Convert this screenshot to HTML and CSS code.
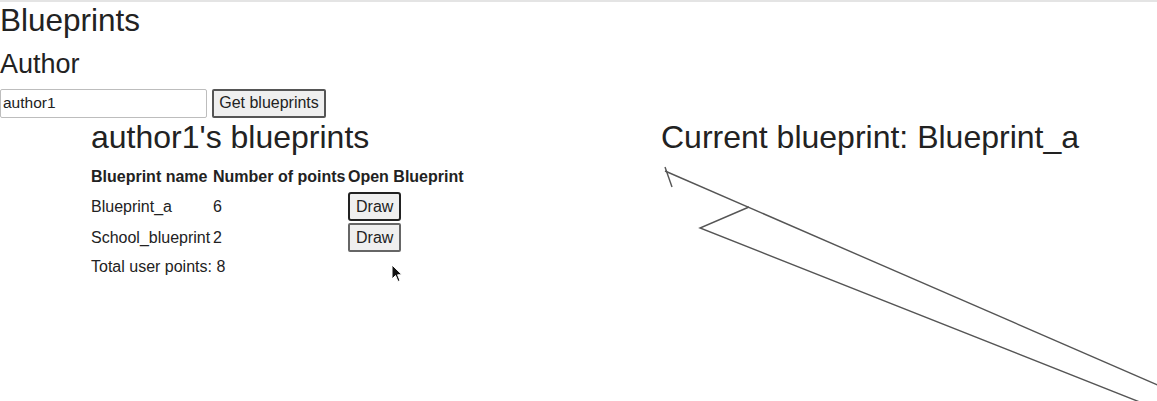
FILE: index.html
```html
<!DOCTYPE html>
<html>
<head>
<meta charset="utf-8">
<link rel="stylesheet" href="styles.css">
</head>
<body>
<h1 class="title">Blueprints</h1>
<h2 class="author-label">Author</h2>
<div class="search">
  <input class="author-input" type="text" value="author1">
  <button class="btn get-btn">Get blueprints</button>
</div>
<div class="main">
  <section class="left">
    <h2 class="col-title">author1's blueprints</h2>
    <table class="bp-table">
      <thead>
        <tr class="head-row">
          <th class="c1">Blueprint name</th>
          <th class="c2">Number of points</th>
          <th class="c3">Open Blueprint</th>
        </tr>
      </thead>
      <tbody>
        <tr class="row">
          <td>Blueprint_a</td>
          <td>6</td>
          <td><button class="btn draw-btn focused">Draw</button></td>
        </tr>
        <tr class="row">
          <td>School_blueprint</td>
          <td>2</td>
          <td><button class="btn draw-btn">Draw</button></td>
        </tr>
      </tbody>
    </table>
    <div class="total">Total user points: 8</div>
    <svg class="cursor" width="12" height="19" viewBox="0 0 12 19">
      <path d="M1 1 L1 15 L4.5 11.5 L7 17.5 L9 16.6 L6.6 10.8 L11 10.8 Z" fill="#111" stroke="#fff" stroke-width="1"/>
    </svg>
  </section>
  <section class="right">
    <h2 class="col-title">Current blueprint: Blueprint_a</h2>
    <svg class="canvas" width="496" height="241" viewBox="661 160 496 241">
      <line x1="665" y1="166" x2="672" y2="186" stroke="#555" stroke-width="1.4"/>
      <polyline points="665,170 1160,385" fill="none" stroke="#555" stroke-width="1.4"/>
      <polyline points="749,206 700,227 1165,411" fill="none" stroke="#555" stroke-width="1.4"/>
    </svg>
  </section>
</div>
</body>
</html>
```

FILE: styles.css
```css
html, body {
  margin: 0;
  padding: 0;
  background: #fff;
  overflow: hidden;
}
body {
  font-family: "Liberation Sans", Arial, sans-serif;
  color: #222;
  font-size: 16px;
  border-top: 2px solid #e4e4e4;
  width: 1157px;
  height: 399px;
}
.title {
  margin: 0;
  font-size: 31.5px;
  font-weight: normal;
  line-height: 36px;
}
.author-label {
  margin: 11px 0 0 0;
  font-size: 27px;
  font-weight: normal;
  line-height: 31px;
}
.search {
  display: flex;
  align-items: center;
  gap: 5px;
  margin-top: 8px;
  height: 30px;
}
.author-input {
  box-sizing: border-box;
  width: 207px;
  height: 29px;
  margin: 0;
  padding: 1px 2px;
  border: 1px solid #bdbdbd;
  border-radius: 2px;
  font-family: "Liberation Sans", Arial, sans-serif;
  font-size: 15.5px;
  color: #222;
  background: #fff;
}
.btn {
  box-sizing: border-box;
  margin: 0;
  font-family: "Liberation Sans", Arial, sans-serif;
  font-size: 16px;
  color: #222;
  background: #efefef;
  border: 2px solid #555;
  border-radius: 2px;
  line-height: 18px;
}
.get-btn {
  width: 114px;
  height: 29px;
  padding: 3px 5px;
}
.main {
  display: flex;
  margin-top: 1px;
}
.left {
  position: relative;
  box-sizing: border-box;
  width: 661px;
  padding-left: 91px;
}
.right {
  flex: 1;
}
.col-title {
  margin: 0;
  font-size: 32px;
  font-weight: normal;
  line-height: 36px;
}
.bp-table {
  border-collapse: collapse;
  margin-top: 8px;
}
.bp-table th, .bp-table td {
  padding: 0;
  text-align: left;
  vertical-align: middle;
  white-space: nowrap;
}
.bp-table th {
  font-weight: bold;
  font-size: 16px;
}
.head-row {
  height: 28px;
}
.row {
  height: 31px;
}
.c1 { width: 122px; }
.c2 { width: 135px; }
.c3 { width: 120px; }
.draw-btn {
  width: 53px;
  height: 29px;
  padding: 3px 6px;
  border-color: #666;
}
.draw-btn.focused {
  border-color: #222;
  border-radius: 3px;
}
.total {
  margin-top: 5px;
  line-height: 18px;
}
.cursor {
  position: absolute;
  left: 391px;
  top: 145px;
}
.canvas {
  display: block;
  margin-top: 6px;
  overflow: visible;
}
```
